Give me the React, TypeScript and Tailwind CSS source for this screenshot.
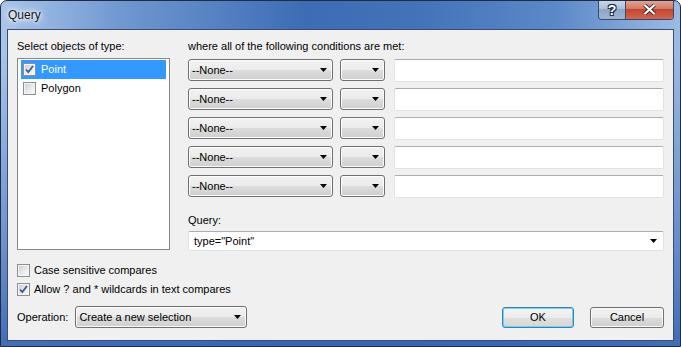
import React from 'react';

const font = { fontFamily: '"Liberation Sans", Arial, sans-serif' };

function Arrow() {
  return (
    <svg width="7" height="4" viewBox="0 0 7 4" className="shrink-0">
      <path d="M0 0H7L3.5 4Z" fill="#000" />
    </svg>
  );
}

function CheckBox({ checked }: { checked?: boolean }) {
  return (
    <span className="w-[13px] h-[13px] shrink-0 border border-[#8e8f8f] bg-[#f4f4f4] flex items-center justify-center">
      <span className="w-[11px] h-[11px] border border-[#f4f4f4] bg-[linear-gradient(135deg,#cbcfd5_0%,#e6e8eb_50%,#f8f8f8_100%)] flex items-center justify-center">
        {checked && (
          <svg width="9" height="9" viewBox="0 0 9 9">
            <path d="M1 4.5L3.3 7L8 1" fill="none" stroke="#3c5a91" strokeWidth="1.8" />
          </svg>
        )}
      </span>
    </span>
  );
}

function DropList({ width, text }: { width: string; text?: string }) {
  return (
    <div
      className={`${width} h-[22px] shrink-0 rounded-[3px] border border-[#707070] bg-[linear-gradient(to_bottom,#f2f2f2_0%,#ebebeb_50%,#dddddd_50%,#cfcfcf_100%)] shadow-[inset_0_0_0_1px_#fcfcfc] flex items-center pl-[3px] pr-[5px]`}
    >
      <span className="flex-1 text-[11px] leading-none text-black">{text}</span>
      <Arrow />
    </div>
  );
}

function TextBox() {
  return (
    <div className="flex-1 h-[23px] rounded-[2px] border border-[#dfe3e8] border-t-[#abadb3] bg-white" />
  );
}

const conditions = [0, 1, 2, 3, 4];

export default function App() {
  return (
    <div style={font} className="w-[681px] h-[347px] text-[11px] text-black">
      <div className="relative w-[681px] h-[347px] overflow-hidden rounded-t-[7px] border border-[#1e2c46] bg-[linear-gradient(90deg,#a9c5ea_0%,#6f97d0_18%,#3d6cb5_45%,#4473b9_62%,#5b89c8_82%,#9cbbe3_100%)] flex flex-col">
        {/* vertical shading of the frame */}
        <div className="absolute inset-0 bg-[linear-gradient(to_bottom,rgba(255,255,255,0)_0%,rgba(255,255,255,0)_15%,rgba(60,105,180,0.55)_70%,rgba(55,100,178,0.9)_100%)]" />

        {/* title bar */}
        <div className="relative h-[28px] shrink-0 flex items-center pl-[7px] pb-[1px]">
          <span className="text-[12px] text-[#141414] [text-shadow:0_0_6px_#ffffff,0_0_3px_#ffffff,0_0_10px_#ffffff]">
            Query
          </span>
        </div>
        <div className="absolute top-[-1px] right-[6px] flex h-[20px] rounded-b-[4px] border border-t-0 border-[#3a4a66] overflow-hidden">
          <div className="w-[27px] h-full border-r border-[#3a4a66] bg-[linear-gradient(to_bottom,#cfdbea_0%,#aebfd6_45%,#8da5c6_50%,#9fb5d3_100%)] flex items-center justify-center">
            <span className="text-[14px] font-bold text-white leading-none [text-shadow:0_0_1px_#1b2a44,1px_1px_0_#1b2a44,-1px_-1px_0_#1b2a44,1px_-1px_0_#1b2a44,-1px_1px_0_#1b2a44]">
              ?
            </span>
          </div>
          <div className="w-[47px] h-full bg-[linear-gradient(to_bottom,#e3a997_0%,#d47a66_45%,#c4452f_50%,#d26650_100%)] flex items-center justify-center">
            <svg width="13" height="11" viewBox="0 0 13 11">
              <path d="M1.5 1L11.5 10M11.5 1L1.5 10" stroke="#3a2a2a" strokeWidth="4" />
              <path d="M1.5 1L11.5 10M11.5 1L1.5 10" stroke="#ffffff" strokeWidth="2.2" />
            </svg>
          </div>
        </div>

        {/* client area */}
        <div className="relative mx-[6px] h-[312px] shrink-0 border border-[#3d4e6c] bg-[#f0f0f0] flex flex-col">
          <div className="flex pt-[9px] pl-[9px] pr-[9px]">
            <div className="w-[153px] shrink-0 flex flex-col">
              <div className="h-[14px] leading-[15px]">Select objects of type:</div>
              <div className="mt-[5px] h-[192px] border border-[#828790] bg-white px-[3px] py-[1px]">
                <div className="h-[19px] bg-[#3399ff] flex items-center gap-[5px] pl-[2px] text-white">
                  <CheckBox checked />
                  <span>Point</span>
                </div>
                <div className="h-[19px] flex items-center gap-[5px] pl-[2px]">
                  <CheckBox />
                  <span>Polygon</span>
                </div>
              </div>
            </div>
            <div className="ml-[18px] flex-1 flex flex-col">
              <div className="h-[14px] leading-[15px]">where all of the following conditions are met:</div>
              <div className="mt-[6px] flex flex-col gap-[6px]">
                {conditions.map((i) => (
                  <div key={i} className="h-[23px] flex items-start">
                    <DropList width="w-[145px]" text="--None--" />
                    <div className="ml-[7px]">
                      <DropList width="w-[45px]" />
                    </div>
                    <div className="ml-[9px] flex-1 flex">
                      <TextBox />
                    </div>
                  </div>
                ))}
              </div>
              <div className="mt-[15px] h-[14px] leading-[15px]">Query:</div>
              <div className="mt-[4px] h-[20px] rounded-[2px] border border-[#dfe3e8] border-t-[#abadb3] bg-white flex items-center pl-[5px] pr-[6px]">
                <span className="flex-1">type="Point"</span>
                <Arrow />
              </div>
            </div>
          </div>

          <div className="mt-[10px] pl-[9px] flex flex-col">
            <div className="h-[19px] flex items-center gap-[4px]">
              <CheckBox />
              <span>Case sensitive compares</span>
            </div>
            <div className="h-[19px] flex items-center gap-[4px]">
              <CheckBox checked />
              <span>Allow ? and * wildcards in text compares</span>
            </div>
          </div>

          <div className="mt-[7px] pl-[9px] pr-[9px] flex items-end">
            <div className="h-[22px] flex items-center">Operation:</div>
            <div className="ml-[7px]">
              <DropList width="w-[172px]" text="Create a new selection" />
            </div>
            <div className="ml-auto flex gap-[16px]">
              <div className="w-[72px] h-[21px] rounded-[3px] border border-[#3c7fb1] shadow-[inset_0_0_0_1px_#6fd3f5] bg-[linear-gradient(to_bottom,#f4f4f4_0%,#ececec_50%,#e0e0e0_50%,#d6d6d6_100%)] flex items-center justify-center">
                OK
              </div>
              <div className="w-[74px] h-[21px] rounded-[3px] border border-[#707070] shadow-[inset_0_0_0_1px_#fbfbfb] bg-[linear-gradient(to_bottom,#f2f2f2_0%,#ebebeb_50%,#dddddd_50%,#cfcfcf_100%)] flex items-center justify-center">
                Cancel
              </div>
            </div>
          </div>
        </div>
        <div className="flex-1" />
      </div>
    </div>
  );
}
